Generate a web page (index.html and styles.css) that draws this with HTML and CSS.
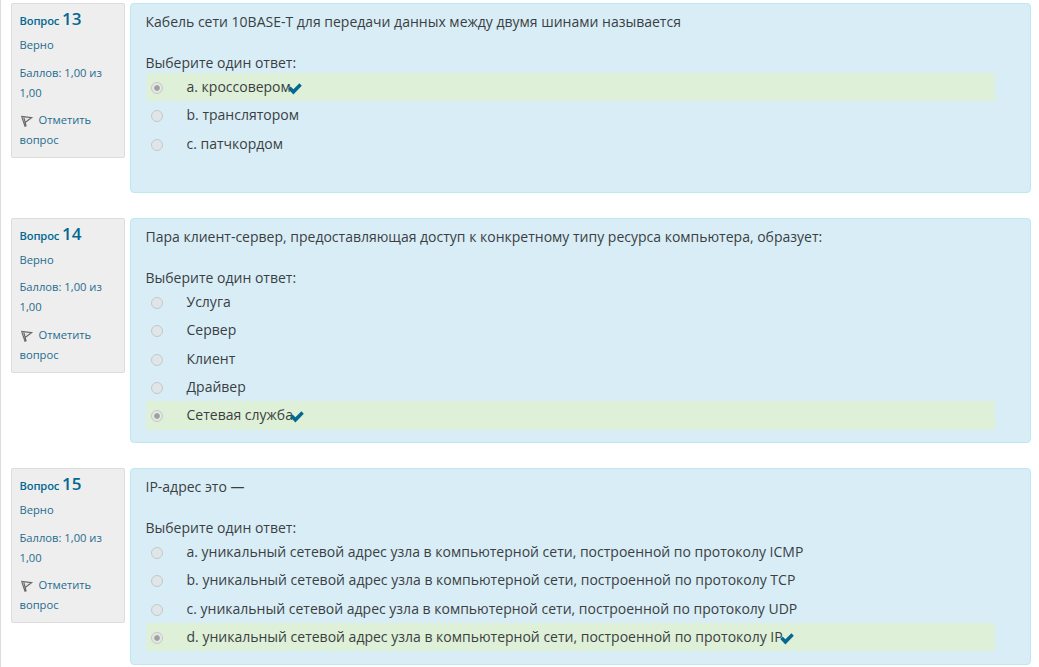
FILE: index.html
```
<!DOCTYPE html>
<html lang="ru">
<head>
<meta charset="utf-8">
<title>Тест</title>
<link rel="stylesheet" href="styles.css">
</head>
<body>
<svg class="defs" aria-hidden="true">
  <symbol id="flag" viewBox="0 0 14 14"><path d="M1.6 2.4L5.2 12.8M3.8 3.4L6.2 12.4M1.2 2.4L11.6 3.6L5.4 8.2" fill="none" stroke="#6a6a6a" stroke-width="1.2"/><path d="M5.2 4.4l3.4.4-2.6 1.9z" fill="#ddd"/></symbol>
  <symbol id="check" viewBox="0 0 14 12"><path d="M0.2 5.9L2.6 3.4L5.4 6.2L11.4 0.3L13.8 2.8L5.4 11.4Z" fill="#046892"/></symbol>
</svg>
<main class="quiz">
  <section class="question q13">
    <aside class="info">
      <h3 class="no">Вопрос <span class="num">13</span></h3>
      <div class="state">Верно</div>
      <div class="grade">Баллов: 1,00 из 1,00</div>
      <div class="mark"><svg class="flag"><use href="#flag"/></svg>Отметить вопрос</div>
    </aside>
    <div class="formulation">
      <p class="text"><span>Кабель сети 10BASE-T для передачи данных между двумя шинами называется</span></p>
      <p class="prompt">Выберите один ответ:</p>
      <div class="answers">
        <div class="answer correct"><i class="radio on"></i><span>a. кроссовером</span><svg class="check"><use href="#check"/></svg></div>
        <div class="answer"><i class="radio"></i><span>b. транслятором</span></div>
        <div class="answer"><i class="radio"></i><span>c. патчкордом</span></div>
      </div>
    </div>
  </section>
  <section class="question q14">
    <aside class="info">
      <h3 class="no">Вопрос <span class="num">14</span></h3>
      <div class="state">Верно</div>
      <div class="grade">Баллов: 1,00 из 1,00</div>
      <div class="mark"><svg class="flag"><use href="#flag"/></svg>Отметить вопрос</div>
    </aside>
    <div class="formulation">
      <p class="text"><span>Пара клиент-сервер, предоставляющая доступ к конкретному типу ресурса компьютера, образует:</span></p>
      <p class="prompt">Выберите один ответ:</p>
      <div class="answers">
        <div class="answer"><i class="radio"></i><span>Услуга</span></div>
        <div class="answer"><i class="radio"></i><span>Сервер</span></div>
        <div class="answer"><i class="radio"></i><span>Клиент</span></div>
        <div class="answer"><i class="radio"></i><span>Драйвер</span></div>
        <div class="answer correct"><i class="radio on"></i><span>Сетевая служба</span><svg class="check"><use href="#check"/></svg></div>
      </div>
    </div>
  </section>
  <section class="question q15">
    <aside class="info">
      <h3 class="no">Вопрос <span class="num">15</span></h3>
      <div class="state">Верно</div>
      <div class="grade">Баллов: 1,00 из 1,00</div>
      <div class="mark"><svg class="flag"><use href="#flag"/></svg>Отметить вопрос</div>
    </aside>
    <div class="formulation">
      <p class="text"><span>IP-адрес это —</span></p>
      <p class="prompt">Выберите один ответ:</p>
      <div class="answers">
        <div class="answer"><i class="radio"></i><span>a. уникальный сетевой адрес узла в компьютерной сети, построенной по протоколу ICMP</span></div>
        <div class="answer"><i class="radio"></i><span>b. уникальный сетевой адрес узла в компьютерной сети, построенной по протоколу TCP</span></div>
        <div class="answer"><i class="radio"></i><span>c. уникальный сетевой адрес узла в компьютерной сети, построенной по протоколу UDP</span></div>
        <div class="answer correct"><i class="radio on"></i><span>d. уникальный сетевой адрес узла в компьютерной сети, построенной по протоколу IP</span><svg class="check"><use href="#check"/></svg></div>
      </div>
    </div>
  </section>
</main>
</body>
</html>
```
FILE: styles.css
```
* { box-sizing: border-box; }
body {
  margin: 0;
  background: #fff;
  color: #3a3f42;
  font: 14px/20px "Open Sans", sans-serif;
}
.defs { display: none; }
.quiz {
  height: 667px;
  padding: 3px 8px 0 10px;
  border-left: 1px solid #ddd;
  overflow: hidden;
}
.question {
  display: flex;
  align-items: flex-start;
  gap: 5px;
  margin-bottom: 25px;
}
.q13 { height: 190px; }
.q14 { height: 225px; }
.q15 { height: 197px; margin-bottom: 0; }
.info {
  width: 114px;
  height: 155px;
  padding: 5px 8px 0 7.5px;
  background: #eee;
  border: 1px solid #dcdcdc;
  border-radius: 2px;
  color: #1f6c8f;
  font-size: 11.2px;
}
.no {
  margin: 0;
  font-size: 11.2px;
  font-weight: 600;
  line-height: 20px;
  letter-spacing: -0.15px;
  white-space: nowrap;
  color: #046892;
}
.num { font-size: 17px; letter-spacing: 0; }
.state { margin-top: 4px; }
.grade { margin-top: 8px; }
.q14 .grade { margin-top: 7px; }
.mark { margin-top: 7px; }
.q14 .mark { margin-top: 8px; }
.flag {
  width: 14px;
  height: 14px;
  margin-right: 5px;
  vertical-align: -4px;
}
.formulation {
  flex: 1;
  height: 100%;
  padding: 8px 35.5px 0 14.5px;
  background: #d9edf7;
  border: 1px solid #bce8f1;
  border-radius: 4px;
}
.text, .prompt { margin: 0; white-space: nowrap; }
.prompt { margin-top: 21px; }
.answer {
  display: flex;
  align-items: center;
  height: 28.33px;
  padding-left: 5.5px;
  white-space: nowrap;
}
.correct { background: #dff0d8; }
.radio {
  flex: none;
  width: 12px;
  height: 12px;
  margin: 2px 23.5px 0 0;
  border: 1px solid #c3c8ca;
  border-radius: 50%;
  background: #e0e5e8;
}
.on { background: radial-gradient(circle, #a0a0a0 0 2.4px, #e5e8e2 3.2px); }
.check {
  width: 14px;
  height: 12px;
  margin: 3px 0 0 -2.5px;
}
```
